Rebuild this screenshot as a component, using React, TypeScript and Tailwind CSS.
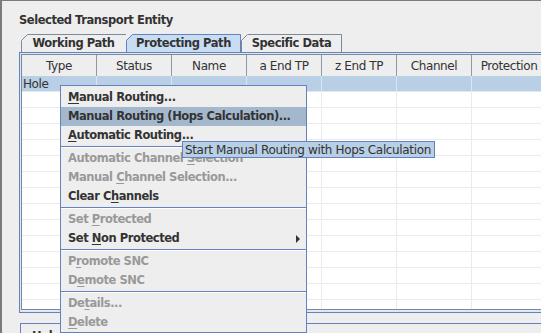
import React from "react";

const cols = ["Type", "Status", "Name", "a End TP", "z End TP", "Channel", "Protection"];

const Tab = ({
  label,
  w,
  selected = false,
  right = false,
  className,
}: {
  label: string;
  w: number;
  selected?: boolean;
  right?: boolean;
  className: string;
}) => (
  <div className={`relative h-[18px] shrink-0 ${className}`}>
    <svg className="absolute inset-0" width={w} height={18}>
      <path d={`M0 18V6L6 0H${w}V18Z`} fill={selected ? "#c8ddf2" : "#eeeeee"} />
      <path
        d={`M0.5 18V6.5L6.5 0.5H${right ? w - 0.5 : w}${right ? "V18" : ""}`}
        fill="none"
        stroke={selected ? "#6382bf" : "#7a8a99"}
      />
    </svg>
    <span className="relative flex h-full items-center justify-center pt-px text-[11.5px] font-bold tracking-[-0.45px] text-[#333333]">
      {label}
    </span>
  </div>
);

const Item = ({
  children,
  disabled = false,
  active = false,
  arrow = false,
}: {
  children: React.ReactNode;
  disabled?: boolean;
  active?: boolean;
  arrow?: boolean;
}) => (
  <div
    className={`flex h-[19px] items-center pl-[7px] pr-[6px] text-[11.5px] font-bold tracking-[-0.45px] ${
      active ? "bg-[#a3b8cc]" : ""
    } ${disabled ? "text-[#999999]" : "text-[#333333]"}`}
  >
    <span className="flex-1 whitespace-nowrap">{children}</span>
    {arrow && (
      <svg width="4" height="8" viewBox="0 0 4 8">
        <path d="M0 0L4 4L0 8Z" fill="#333333" />
      </svg>
    )}
  </div>
);

const Sep = () => (
  <div className="h-[4px] pt-px">
    <div className="h-px bg-[#6382bf]" />
    <div className="h-px bg-white" />
  </div>
);

const U = ({ children }: { children: React.ReactNode }) => (
  <span className="underline underline-offset-[2px]">{children}</span>
);

export default function App() {
  const rows = Array.from({ length: 15 }, (_, i) => i);

  return (
    <div className="relative h-[333px] w-[541px] overflow-hidden border-l-2 border-t border-[#7b7b7b] bg-[#eeeeee] font-['DejaVu_Sans',sans-serif] text-[#333333]">
      <div className="mb-[7px] h-[26px] pl-[17px] pt-[12px] text-[11.5px] font-bold leading-[14px] tracking-[-0.45px]">
        Selected Transport Entity
      </div>

      <div className="flex pl-[19px]">
        <Tab label="Working Path" w={105} className="w-[105px]" />
        <Tab label="Protecting Path" w={115} selected right className="w-[115px]" />
        <Tab label="Specific Data" w={101} right className="w-[101px]" />
      </div>

      <div className="ml-[17px] h-[261px] border-y border-l border-[#6382bf] bg-[#dfe8f2] pb-[2px] pl-px pt-px">
        <div className="h-[256px] overflow-hidden border-y border-l border-[#7a8a99] bg-white">
          <div className="flex h-[21px]">
            {cols.map((c) => (
              <div
                key={c}
                className="flex w-[75px] shrink-0 items-center justify-center border-r border-[#8a99a8] bg-[#eeeeee] text-[12px] tracking-[-0.4px]"
              >
                {c}
              </div>
            ))}
          </div>
          {rows.map((r) => (
            <div
              key={r}
              className={`flex h-[16px] border-b ${
                r === 0 ? "border-[#e2e8ef] bg-[#b8cfe5]" : "border-[#ebebeb]"
              }`}
            >
              {cols.map((c, ci) => (
                <div
                  key={c}
                  className={`flex w-[75px] shrink-0 items-center border-r pl-px text-[12px] leading-none tracking-[-0.4px] ${
                    r === 0 ? "border-[#dbe5ef]" : "border-[#ebebeb]"
                  }`}
                >
                  {r === 0 && ci === 0 ? "Hole" : ""}
                </div>
              ))}
            </div>
          ))}
        </div>
      </div>

      <div className="ml-[18px] mt-[10px] h-[20px] border-l border-t border-[#6382bf] pl-[11px] pt-[4px] text-[11.5px] font-bold tracking-[-0.45px]">
        Hole
      </div>

      <div className="absolute left-[58px] top-[84px] w-[247px] border border-[#6382bf] bg-[#eeeeee] pt-[2px]">
        <Item>
          <U>M</U>anual Routing...
        </Item>
        <Item active>Manual Routing (Hops Calculation)...</Item>
        <Item>
          <U>A</U>utomatic Routing...
        </Item>
        <Sep />
        <Item disabled>
          Automatic Channel <U>S</U>election
        </Item>
        <Item disabled>
          Manual <U>C</U>hannel Selection...
        </Item>
        <Item>
          Clear C<U>h</U>annels
        </Item>
        <Sep />
        <Item disabled>
          Set <U>P</U>rotected
        </Item>
        <Item arrow>
          Set <U>N</U>on Protected
        </Item>
        <Sep />
        <Item disabled>
          P<U>r</U>omote SNC
        </Item>
        <Item disabled>
          D<U>e</U>mote SNC
        </Item>
        <Sep />
        <Item disabled>
          De<U>t</U>ails...
        </Item>
        <Item disabled>
          <U>D</U>elete
        </Item>
      </div>

      <div className="absolute left-[180px] top-[140px] flex h-[17px] w-[253px] items-center border border-[#6382bf] bg-[#b8cfe5] pl-[2px] text-[12px] tracking-[-0.35px] whitespace-nowrap">
        Start Manual Routing with Hops Calculation
      </div>
    </div>
  );
}
